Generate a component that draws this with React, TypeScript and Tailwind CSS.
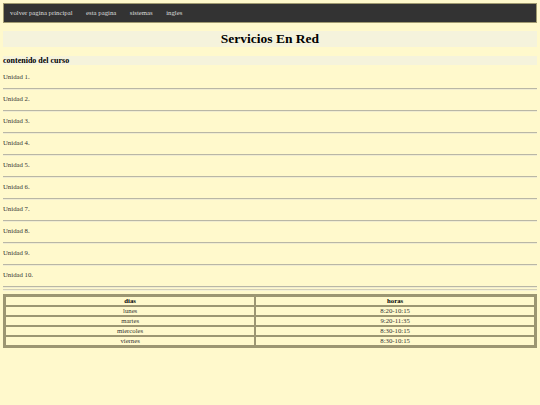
import React from "react";

const units = [1, 2, 3, 4, 5, 6, 7, 8, 9, 10];
const rows = [
  ["lunes", "8:20-10:15"],
  ["martes", "9:20-11:35"],
  ["miercoles", "8:30-10:15"],
  ["viernes", "8:30-10:15"],
];

export default function App() {
  return (
    <div
      className="min-h-[405px] bg-[#fff9cc] px-[3px] pt-[3px] text-[#222]"
      style={{ fontFamily: '"Liberation Serif", "Times New Roman", serif' }}
    >
      <nav className="flex h-[20px] items-center gap-[13.5px] border border-[#a09a70] bg-[#333333] pl-[6px] text-[6.75px] text-[#dddddd]">
        <span>volver pagina principal</span>
        <span>esta pagina</span>
        <span>sistemas</span>
        <span>ingles</span>
      </nav>
      <h1 className="mt-[8px] flex h-[16px] items-center justify-center bg-[#f5f3dc] text-[13.5px] font-bold leading-none text-black">
        Servicios En Red
      </h1>
      <h2 className="mt-[9px] flex h-[9px] items-center bg-[#f5f3dc] text-[8px] font-bold leading-none text-black">
        contenido del curso
      </h2>
      <div className="mt-[3px] flex flex-col">
        {units.map((u) => (
          <div key={u} className="flex flex-col">
            <div className="pt-[5px] pb-[7px] text-[6.75px] leading-[8px] text-[#333]">
              Unidad {u}.
            </div>
            <div className="h-[2px] border-t border-b border-t-[#b9b7a6] border-b-[#f0ecd0]" />
          </div>
        ))}
        <div className="mt-[1px] h-[2px] border-t border-b border-t-[#d2cfb8] border-b-[#f5f1d6]" />
      </div>
      <table className="mt-[3px] w-full border-collapse border-[3px] border-[#9c9672] text-[6.75px] leading-[8px] text-[#333]">
        <thead>
          <tr>
            <th className="border-2 border-[#9c9672] font-bold text-black">dias</th>
            <th className="border-2 border-[#9c9672] font-bold text-black">horas</th>
          </tr>
        </thead>
        <tbody>
          {rows.map(([d, h]) => (
            <tr key={d}>
              <td className="border-2 border-[#9c9672] text-center">{d}</td>
              <td className="border-2 border-[#9c9672] text-center">{h}</td>
            </tr>
          ))}
        </tbody>
      </table>
    </div>
  );
}
